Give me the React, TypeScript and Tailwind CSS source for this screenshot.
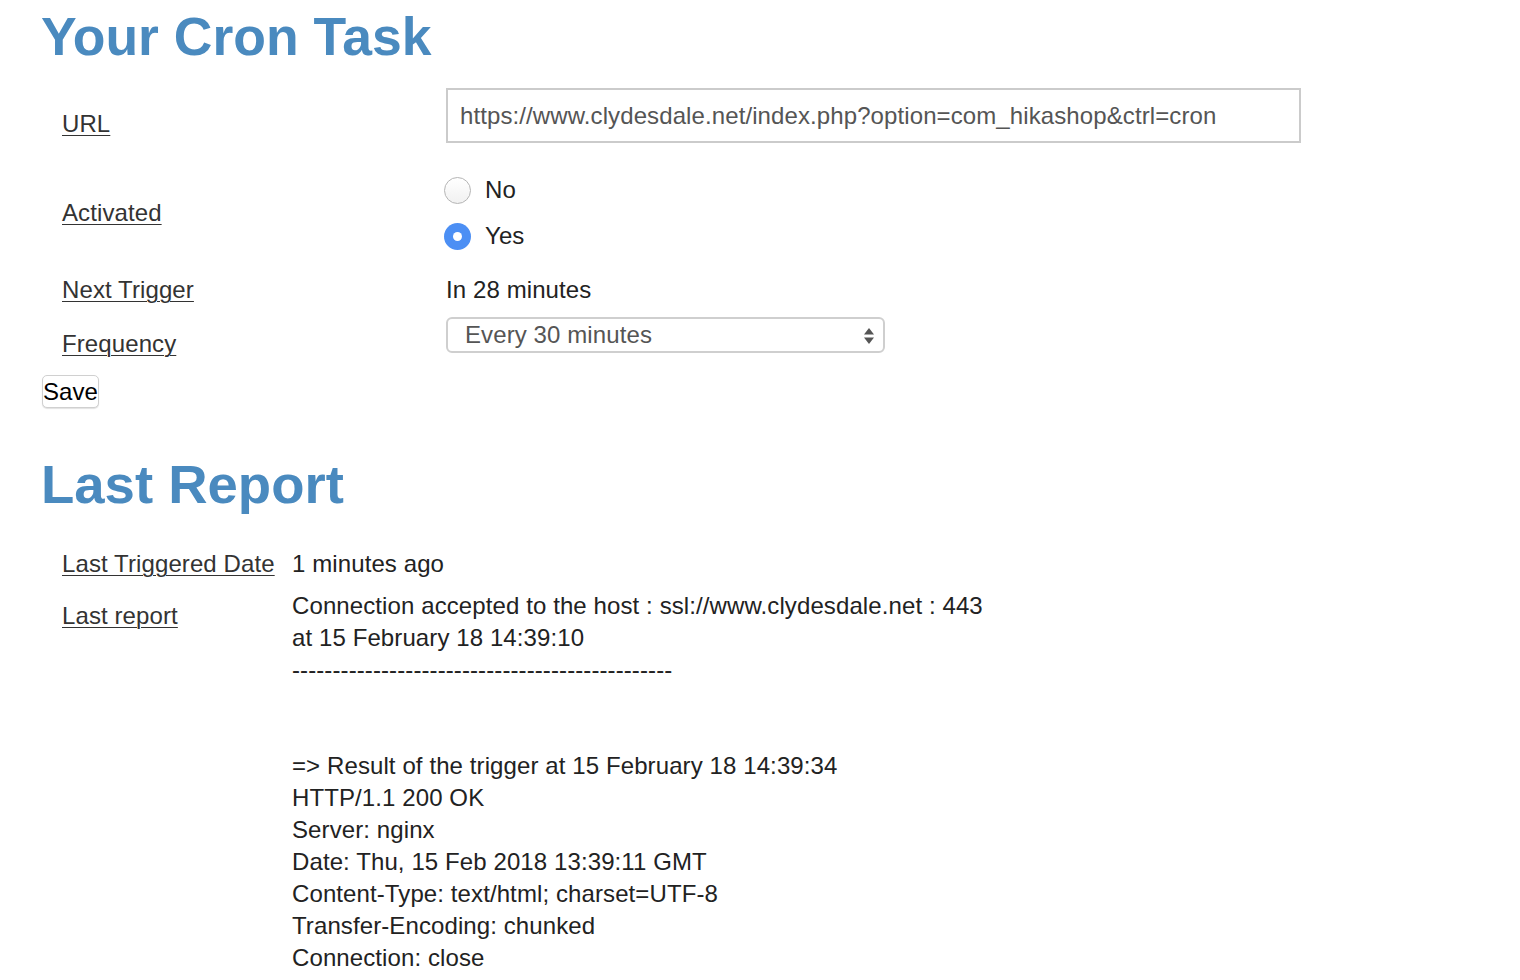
import React, { useState } from "react";

const font = { fontFamily: '"Liberation Sans", Arial, Helvetica, sans-serif' };

const reportLines = [
  "Connection accepted to the host : ssl://www.clydesdale.net : 443",
  "at 15 February 18 14:39:10",
  "-----------------------------------------------",
  "",
  "",
  "=> Result of the trigger at 15 February 18 14:39:34",
  "HTTP/1.1 200 OK",
  "Server: nginx",
  "Date: Thu, 15 Feb 2018 13:39:11 GMT",
  "Content-Type: text/html; charset=UTF-8",
  "Transfer-Encoding: chunked",
  "Connection: close",
];

function Label({ children }: { children: React.ReactNode }) {
  return (
    <a href="#" className="text-[#333] underline underline-offset-[3px] decoration-1">
      {children}
    </a>
  );
}

function Radio({ checked, label, onClick }: { checked: boolean; label: string; onClick: () => void }) {
  return (
    <label className="flex h-[46px] items-center cursor-pointer" onClick={onClick}>
      {checked ? (
        <span className="flex h-[27px] w-[27px] items-center justify-center rounded-full bg-[#4c8ff4]">
          <span className="h-[9px] w-[9px] rounded-full bg-white" />
        </span>
      ) : (
        <span className="h-[27px] w-[27px] rounded-full border border-[#b5b5b5] bg-gradient-to-b from-white to-[#f1f1f1]" />
      )}
      <span className="ml-[14px] text-[#222]">{label}</span>
    </label>
  );
}

export default function App() {
  const [active, setActive] = useState(true);

  return (
    <div
      className="min-h-[980px] bg-white pl-[41px] text-[24px] leading-[32px] tracking-[0.1px] text-[#333]"
      style={font}
    >
      <h1 className="mt-[7px] h-[60px] text-[53.5px] font-bold leading-[60px] tracking-normal text-[#4a8abf]">
        Your Cron Task
      </h1>

      {/* task settings */}
      <div className="ml-[21px] mt-[21px] grid grid-cols-[384px_1fr]">
        <div className="pt-[20px]">
          <Label>URL</Label>
        </div>
        <div className="flex h-[55px] w-[855px] items-center border-2 border-[#cbcbcb] pl-[12px] text-[#555]">
          https://www.clydesdale.net/index.php?option=com_hikashop&amp;ctrl=cron
        </div>

        <div className="mt-[24px] flex items-center">
          <Label>Activated</Label>
        </div>
        <div className="mt-[24px] -ml-[2px]">
          <Radio checked={!active} label="No" onClick={() => setActive(false)} />
          <Radio checked={active} label="Yes" onClick={() => setActive(true)} />
        </div>

        <div className="mt-[15px]">
          <Label>Next Trigger</Label>
        </div>
        <div className="mt-[15px] text-[#222]">In 28 minutes</div>

        <div className="mt-[11px] pt-[11px]">
          <Label>Frequency</Label>
        </div>
        <div className="mt-[11px]">
          <div className="relative flex h-[36px] w-[439px] items-center rounded-[6px] border-2 border-[#cfcfcf] bg-white pl-[17px] text-[#555]">
            Every 30 minutes
            <svg className="absolute right-[8px] top-[8px]" width="12" height="18" viewBox="0 0 12 18">
              <path d="M6 1 L11 7.5 H1 Z" fill="#555" />
              <path d="M6 17 L11 10.5 H1 Z" fill="#555" />
            </svg>
          </div>
        </div>
      </div>

      <button className="ml-[1px] mt-[15px] flex h-[33px] w-[57px] items-center justify-center rounded-[5px] border border-[#d0d0d0] bg-white text-black shadow-[0_1px_1px_rgba(0,0,0,0.12)]">
        Save
      </button>

      <h2 className="mt-[47px] h-[60px] text-[54.5px] font-bold leading-[60px] tracking-normal text-[#4a8abf]">
        Last Report
      </h2>

      {/* last run */}
      <div className="ml-[21px] mt-[33px] grid grid-cols-[230px_1fr]">
        <div>
          <Label>Last Triggered Date</Label>
        </div>
        <div className="text-[#222]">1 minutes ago</div>

        <div className="mt-[10px] pt-[10px]">
          <Label>Last report</Label>
        </div>
        <div className="mt-[10px] text-[#222]">
          {reportLines.map((line, i) => (
            <div key={i} className="h-[32px] whitespace-pre">
              {line}
            </div>
          ))}
        </div>
      </div>
    </div>
  );
}
